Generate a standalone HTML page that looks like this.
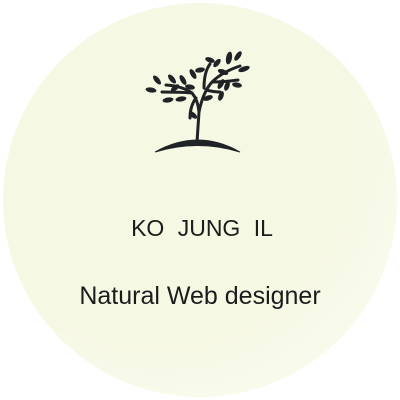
<!DOCTYPE html>
<html><head><style>
html,body{margin:0;padding:0;background:#fff;width:400px;height:400px;overflow:hidden}
.c{position:absolute;left:3px;top:3px;width:394px;height:394px;border-radius:50%;
background:radial-gradient(circle at 40% 38%,#f5f8e2 0%,#f5f8e3 55%,#f9fbee 80%,#fefef9 100%)}
.t{position:absolute;left:0;width:400px;text-align:center;font-family:"Liberation Sans",sans-serif;color:#1c1c1c}
</style></head><body>
<div class="c"></div>
<svg style="position:absolute;left:0;top:0" width="400" height="400">
<g fill="#1f2326" stroke="#1f2326" stroke-linecap="round">
<path d="M155 152 Q198 128 240 152 Q198 139 155 152Z" stroke-width="1"/>
<path d="M197 142 L199 112 Q198 100 192 93 Q182 86 166 85 M192 93 Q180 92 162 92 M199 112 Q203 92 212 82 Q222 72 240 66 M212 82 Q224 82 238 80 M206 90 Q214 92 220 92 M196 98 Q190 106 190 118 M204 88 Q204 72 210 64" fill="none" stroke-width="3"/>
<g stroke="none">
<ellipse cx="229" cy="58" rx="3" ry="6.5" transform="rotate(10 229 58)"/>
<ellipse cx="238" cy="56" rx="2.5" ry="5.5" transform="rotate(35 238 56)"/>
<ellipse cx="244" cy="69" rx="2.5" ry="6" transform="rotate(70 244 69)"/>
<ellipse cx="237" cy="85" rx="2.5" ry="5" transform="rotate(100 237 85)"/>
<ellipse cx="223" cy="72" rx="2.5" ry="5.5" transform="rotate(-70 223 72)"/>
<ellipse cx="217" cy="63" rx="2.5" ry="5" transform="rotate(40 217 63)"/>
<ellipse cx="210" cy="60" rx="2.5" ry="5" transform="rotate(-70 210 60)"/>
<ellipse cx="200" cy="70" rx="2.5" ry="5" transform="rotate(80 200 70)"/>
<ellipse cx="193" cy="74" rx="2.5" ry="5.5" transform="rotate(-30 193 74)"/>
<ellipse cx="221" cy="84" rx="2.5" ry="5.5" transform="rotate(30 221 84)"/>
<ellipse cx="227" cy="86" rx="2.5" ry="5" transform="rotate(20 227 86)"/>
<ellipse cx="221" cy="96" rx="2.5" ry="5" transform="rotate(20 221 96)"/>
<ellipse cx="208" cy="98" rx="2.5" ry="5" transform="rotate(70 208 98)"/>
<ellipse cx="183" cy="80" rx="2.5" ry="5.5" transform="rotate(-30 183 80)"/>
<ellipse cx="172" cy="79" rx="2.5" ry="5.5" transform="rotate(-40 172 79)"/>
<ellipse cx="157" cy="80" rx="2.5" ry="5.5" transform="rotate(-40 157 80)"/>
<ellipse cx="151" cy="90" rx="2.5" ry="5.5" transform="rotate(-80 151 90)"/>
<ellipse cx="168" cy="100" rx="2.5" ry="5.5" transform="rotate(-100 168 100)"/>
<ellipse cx="181" cy="99" rx="2.5" ry="5.5" transform="rotate(80 181 99)"/>
<ellipse cx="190" cy="87" rx="2.5" ry="5" transform="rotate(-80 190 87)"/>
<ellipse cx="193" cy="115" rx="2.5" ry="5" transform="rotate(-50 193 115)"/>
<ellipse cx="175" cy="88" rx="2.5" ry="5" transform="rotate(50 175 88)"/>
</g></g>
</svg>
<div class="t" style="top:215px;font-size:23px;word-spacing:7px;left:2px">KO JUNG IL</div>
<div class="t" style="top:282px;font-size:25px">Natural Web designer</div>
</body></html>
